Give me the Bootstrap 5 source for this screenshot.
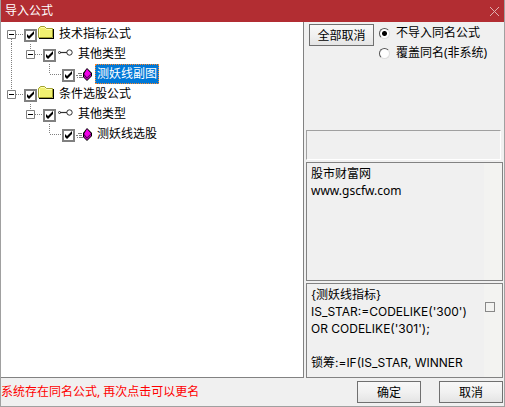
<!DOCTYPE html>
<html lang="zh-CN">
<head>
<meta charset="utf-8">
<meta name="viewport" content="width=device-width, initial-scale=1">
<title>导入公式</title>
<link href="https://cdn.jsdelivr.net/npm/bootstrap@5.3.0/dist/css/bootstrap.min.css" rel="stylesheet">
<style>
body{font:12px/20px "Noto Sans","Noto Sans CJK SC",sans-serif;color:#000;background:#f0f0f0}
.dialog{border:1px solid #a0a0a0;border-top:0}
.titlebar{background:#b22d32;color:#fff;height:22px;padding:0 5px 0 4px}
.titlebar h1{font-size:12px;line-height:22px;font-weight:400}
.bare{background:none;border:0;padding:0;line-height:0;display:block}
.tree{background:#fff;border:solid #828282;border-width:0 1px 1px 0;padding:2px 1px;flex:1 1 0}
.tree-row{height:20px}
.tree-row svg{display:block;overflow:visible;flex:none}
.tree input{appearance:none;width:13px;height:13px;border:2px solid #808080;background:#fff;margin:5px 1px 0 3px;flex:none}
.tree input:checked{background:#fff url("data:image/svg+xml,%3Csvg xmlns='http://www.w3.org/2000/svg' viewBox='0 0 9 9'%3E%3Cpath d='M1 3v3l2 2 5-5V0L3 5z'/%3E%3C/svg%3E") center/9px 9px no-repeat}
.tree label{margin-left:3px;padding:0 1px;border:1px solid transparent;line-height:18px}
.tree label.picked{background:#0078d7;color:#fff;border:1px dotted #ff8728}
.side{flex:0 0 200px;padding:2px 1px 0 2px}
.push{background:linear-gradient(#f8f8f8,#f1f1f1 50%,#e4e4e4);border:1px solid #707070;color:#000;font-size:12px;line-height:19px;height:22px;padding:0;width:64px}
.side .push{margin-left:3px;width:65px}
.choices{margin-left:5px;margin-top:-1px}
.choices input{appearance:none;width:11px;height:11px;border-radius:50%;border:1px solid;border-color:#555 #ddd #ddd #555;background:#fff;margin:0 6px 0 0}
.choices input:checked{background:radial-gradient(circle,#000 2px,#fff 3px)}
.choices label{line-height:20px}
.choices .form-row{height:20px}
.options{height:106px}
.status{height:30px;border:1px solid #a0a0a0;border-right-color:#fff;border-bottom-color:#fff;margin:0 2px 2px 0}
.memo{border:1px solid #828282}
.memo textarea{border:0;resize:none;outline:0;background:#f0f0f0;color:#000;overflow:hidden;font-size:12px;line-height:17px;padding:2px 0 0 4px;min-width:0;white-space:pre}
.track{flex:0 0 18px;background:#f3f3f1}
.thumb{width:10px;height:10px;border:1px solid #888;margin:18px 0 0 1px}
.memo.code-box{height:95px;margin-top:2px}
.code-box textarea{font-family:Inter,"Noto Sans CJK SC",sans-serif}
.footbar{height:28px;padding-right:1px;gap:18px}
.notice{color:#f00}
</style>
<script src="https://cdn.jsdelivr.net/npm/bootstrap@5.3.0/dist/js/bootstrap.bundle.min.js"></script>
</head>
<body>
<svg class="d-none" aria-hidden="true">
  <defs>
    <symbol id="minus" viewBox="0 0 9 9"><path fill="#fff" stroke="#808080" d="M.5.5h8v8h-8z"/><path fill="#000" d="M2 4h5v1H2z"/></symbol>
    <symbol id="folder" viewBox="0 0 16 20"><path d="M1 14h14V5h1v10H1z"/><path fill="#f0f070" stroke="#a0a030" d="M.5 13.500v-9l2-2h4l2 2h6v9z"/><path fill="none" stroke="#ffffb0" d="M3 3.500h3.500l2 2H14M1.500 5v8"/></symbol>
    <symbol id="key" viewBox="0 0 16 20"><g fill="none" stroke="#303030"><path stroke-width="1.200" d="M3 8.500h7"/><circle cx="2.500" cy="8.500" r="1"/><circle cx="12.500" cy="8.500" r="2.700"/></g></symbol>
    <symbol id="gem" viewBox="0 0 16 20"><path stroke="#808080" d="M2 9.500h4M0 11.500h2M3 11.500h3M1 13.500h1M3 13.500h4"/><path d="M11 4l5 5v3l-5 5-4-4V9z"/><path fill="#f000e8" d="M11 5l4 4.500-4 4L8 10z"/><path fill="#b000b0" d="M8 11l3 3 4-4v2l-4 4-3-3z"/></symbol>
  </defs>
</svg>
<div class="dialog d-flex flex-column vh-100">
  <header class="titlebar d-flex justify-content-between align-items-center">
    <h1 class="m-0">导入公式</h1>
    <button class="bare" type="button" aria-label="关闭"><svg width="9" height="9" viewBox="0 0 9 9"><path d="M0 0l9 9M9 0L0 9" stroke="#e0b0b0"/></svg></button>
  </header>
  <main class="d-flex flex-grow-1">
    <section class="tree">
      <div class="tree-row d-flex">
        <button class="bare" type="button" aria-label="折叠"><svg width="19" height="20"><path d="M9.500 15v5M14 10.500h7" stroke="#808080" stroke-dasharray="1 1"/><use href="#minus" x="5" y="6" width="9" height="9"/></svg></button>
        <input type="checkbox" id="a" checked><svg width="16" height="20"><use href="#folder"/></svg><label for="a">技术指标公式</label>
      </div>
      <div class="tree-row d-flex">
        <svg width="19" height="20"><path d="M9.500 0v20" stroke="#808080" stroke-dasharray="1 1"/></svg>
        <button class="bare" type="button" aria-label="折叠"><svg width="19" height="20"><path d="M9.500 0v6M14 10.500h7" stroke="#808080" stroke-dasharray="1 1"/><use href="#minus" x="5" y="6" width="9" height="9"/></svg></button>
        <input type="checkbox" id="b" checked><svg width="16" height="20"><use href="#key"/></svg><label for="b">其他类型</label>
      </div>
      <div class="tree-row d-flex">
        <svg width="38" height="20"><path d="M9.500 0v20" stroke="#808080" stroke-dasharray="1 1"/></svg>
        <svg width="19" height="20"><path d="M9.500 0v10M10 10.500h11" stroke="#808080" stroke-dasharray="1 1"/></svg>
        <input type="checkbox" id="c" checked><svg width="16" height="20"><use href="#gem"/></svg><label class="picked" for="c">测妖线副图</label>
      </div>
      <div class="tree-row d-flex">
        <button class="bare" type="button" aria-label="折叠"><svg width="19" height="20"><path d="M9.500 0v6M14 10.500h7" stroke="#808080" stroke-dasharray="1 1"/><use href="#minus" x="5" y="6" width="9" height="9"/></svg></button>
        <input type="checkbox" id="d" checked><svg width="16" height="20"><use href="#folder"/></svg><label for="d">条件选股公式</label>
      </div>
      <div class="tree-row d-flex">
        <svg width="19" height="20"></svg>
        <button class="bare" type="button" aria-label="折叠"><svg width="19" height="20"><path d="M9.500 0v6M14 10.500h7" stroke="#808080" stroke-dasharray="1 1"/><use href="#minus" x="5" y="6" width="9" height="9"/></svg></button>
        <input type="checkbox" id="e" checked><svg width="16" height="20"><use href="#key"/></svg><label for="e">其他类型</label>
      </div>
      <div class="tree-row d-flex">
        <svg width="38" height="20"></svg>
        <svg width="19" height="20"><path d="M9.500 0v10M10 10.500h11" stroke="#808080" stroke-dasharray="1 1"/></svg>
        <input type="checkbox" id="f" checked><svg width="16" height="20"><use href="#gem"/></svg><label for="f">测妖线选股</label>
      </div>
    </section>
    <section class="side d-flex flex-column">
      <div class="options d-flex align-items-start">
        <button class="push" type="button">全部取消</button>
        <div class="choices">
          <div class="form-row d-flex align-items-center"><input type="radio" name="mode" id="skip" checked><label for="skip">不导入同名公式</label></div>
          <div class="form-row d-flex align-items-center"><input type="radio" name="mode" id="over"><label for="over">覆盖同名(非系统)</label></div>
        </div>
      </div>
      <div class="status"></div>
      <div class="memo d-flex flex-grow-1">
        <textarea class="flex-grow-1" aria-label="说明" readonly>股市财富网
www.gscfw.com</textarea>
        <div class="track"></div>
      </div>
      <div class="memo code-box d-flex">
        <textarea class="flex-grow-1" aria-label="公式源码" readonly>{测妖线指标}
IS_STAR:=CODELIKE('300')
OR CODELIKE('301');

锁筹:=IF(IS_STAR, WINNER</textarea>
        <div class="track"><div class="thumb"></div></div>
      </div>
    </section>
  </main>
  <footer class="footbar d-flex align-items-center">
    <span class="notice me-auto">系统存在同名公式, 再次点击可以更名</span>
    <button class="push" type="button">确定</button>
    <button class="push" type="button">取消</button>
  </footer>
</div>
</body>
</html>
